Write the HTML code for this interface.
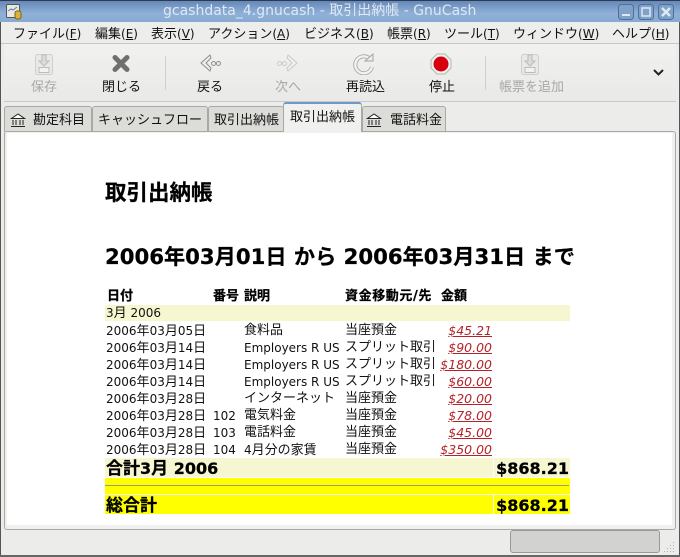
<!DOCTYPE html>
<html><head><meta charset="utf-8">
<style>
html,body{margin:0;padding:0;width:680px;height:557px;overflow:hidden;background:#ececea}
*{box-sizing:border-box}
body{font-family:"DejaVu Sans","WenQuanYi Zen Hei","Noto Sans CJK JP",sans-serif;font-size:13px;color:#111;position:relative}
.t{position:absolute;white-space:nowrap;line-height:16px}
.b{font-weight:bold;color:#000;-webkit-text-stroke:.25px #000}
.abs{position:absolute}
u{text-decoration:underline}
em{font-style:normal;font-size:12px}
.g{color:#a8a8a4}
.am{position:absolute;color:#b4232a;font-style:italic;font-size:12.5px;text-decoration:underline;white-space:nowrap;line-height:16px;text-align:right;right:188px}
.lg{font-size:17px;line-height:18px}
.lg em{font-size:16px}
</style></head><body>
<!-- title bar -->
<div class="abs" style="left:0;top:0;width:680px;height:22px;background:linear-gradient(#6688b8,#8fb1d8 60%,#88aad0);border-top:1px solid #2e3a50"></div>
<div class="t" style="left:163px;top:3px;color:#dfe8f2;font-size:14px">gcashdata_4.gnucash - 取引出納帳 - GnuCash</div>
<svg class="abs" style="left:4px;top:3px" width="18" height="17" viewBox="0 0 18 17"><rect x="2.500" y="1.500" width="13" height="13" rx="1" fill="#e8e8e4" stroke="#555"/><path d="M4 8l3-2 2 1 4-3" stroke="#5a7fb0" fill="none"/><rect x="11" y="8" width="6" height="8" rx="2" fill="#d9b23a" stroke="#7c6318"/></svg>
<svg class="abs" style="left:616px;top:2px" width="60" height="19" viewBox="0 0 60 19">
<g fill="#7fa2ca" stroke="#4f6f98"><rect x="2.500" y="2.500" width="15" height="15" rx="3"/><rect x="22.500" y="2.500" width="15" height="15" rx="3"/><rect x="42.500" y="2.500" width="15" height="15" rx="3"/></g>
<g stroke="#dfe8f2" stroke-width="2" fill="none"><path d="M6 13h8"/><rect x="26" y="6" width="8" height="8" stroke-width="1.500"/><path d="M46 6l8 8M54 6l-8 8" stroke-width="2.500"/></g></svg>
<div class="abs" style="left:0;top:22px;width:4px;height:535px;background:#ececea;border-left:1px solid #555"></div>
<div class="abs" style="right:0;top:22px;width:4px;height:535px;background:#ececea;border-right:1px solid #555"></div>
<!-- menu -->
<div class="abs" style="left:1px;top:22px;width:678px;height:22px;background:#ededeb;border-bottom:1px solid #c8c8c4"></div>
<div class="t" style="left:13px;top:26px">ファイル<em>(<u>F</u>)</em></div>
<div class="t" style="left:95px;top:26px">編集<em>(<u>E</u>)</em></div>
<div class="t" style="left:151px;top:26px">表示<em>(<u>V</u>)</em></div>
<div class="t" style="left:208px;top:26px">アクション<em>(<u>A</u>)</em></div>
<div class="t" style="left:304px;top:26px">ビジネス<em>(<u>B</u>)</em></div>
<div class="t" style="left:387px;top:26px">帳票<em>(<u>R</u>)</em></div>
<div class="t" style="left:444px;top:26px">ツール<em>(<u>T</u>)</em></div>
<div class="t" style="left:513px;top:26px">ウィンドウ<em>(<u>W</u>)</em></div>
<div class="t" style="left:612px;top:26px">ヘルプ<em>(<u>H</u>)</em></div>
<!-- toolbar -->
<div class="abs" style="left:4px;top:44px;width:672px;height:58px;background:linear-gradient(#f1f1ef,#e9e9e7);border-bottom:1px solid #c9c9c5"></div>
<svg class="abs" style="left:34px;top:52px" width="20" height="24" viewBox="0 0 20 24"><rect x="1.500" y="2.500" width="17" height="20" rx="2" fill="#e9e9e6" stroke="#cfcfcb"/><path d="M8 3h4v6h3l-5 5-5-5h3z" fill="#dcdcd8" stroke="#bcbcb8"/><rect x="5" y="15.500" width="10" height="5" fill="#f2f2f0" stroke="#bcbcb8"/></svg>
<div class="t g" style="left:31px;top:80px">保存</div>
<svg class="abs" style="left:111px;top:53px" width="20" height="21" viewBox="0 0 20 21"><path d="M4 4.500l12 12M16 4.500l-12 12" stroke="#6f6f6b" stroke-width="5" stroke-linecap="round"/></svg>
<div class="t" style="left:102px;top:80px">閉じる</div>
<div class="abs" style="left:165px;top:56px;width:1px;height:34px;background:#cfcfcb"></div>
<svg class="abs" style="left:198px;top:53px" width="24" height="20" viewBox="0 0 24 20"><path d="M12 2L3 10l9 8 1-3-5-5 5-5z" fill="#efefec" stroke="#8e8e8a"/><circle cx="15.500" cy="10.500" r="2" fill="none" stroke="#8e8e8a"/><circle cx="20.500" cy="10.500" r="2" fill="none" stroke="#8e8e8a"/></svg>
<div class="t" style="left:197px;top:80px">戻る</div>
<svg class="abs" style="left:276px;top:53px" width="24" height="20" viewBox="0 0 24 20"><path d="M12 2l9 8-9 8-1-3 5-5-5-5z" fill="#f0f0ee" stroke="#cacac6"/><circle cx="8.500" cy="10.500" r="2" fill="none" stroke="#cacac6"/><circle cx="3.500" cy="10.500" r="2" fill="none" stroke="#cacac6"/></svg>
<div class="t g" style="left:275px;top:80px">次へ</div>
<svg class="abs" style="left:352px;top:53px" width="24" height="22" viewBox="0 0 24 22"><path d="M18 6A8.500 8.500 0 1 0 20 14" fill="none" stroke="#a4a4a0" stroke-width="4"/><path d="M18 6A8.500 8.500 0 1 0 20 14" fill="none" stroke="#f2f2f0" stroke-width="2.400"/><path d="M13 8h8V1z" fill="#eeeeeb" stroke="#a4a4a0"/></svg>
<div class="t" style="left:346px;top:80px">再読込</div>
<svg class="abs" style="left:430px;top:53px" width="22" height="22" viewBox="0 0 22 22"><path d="M7 1h8l6 6v8l-6 6H7l-6-6V7z" fill="#f1f1ee" stroke="#b4b4b0"/><circle cx="11" cy="11" r="7.500" fill="#d6000f"/></svg>
<div class="t" style="left:429px;top:80px">停止</div>
<div class="abs" style="left:485px;top:56px;width:1px;height:34px;background:#cfcfcb"></div>
<svg class="abs" style="left:520px;top:52px" width="20" height="24" viewBox="0 0 20 24"><rect x="1.500" y="2.500" width="17" height="20" rx="2" fill="#e9e9e6" stroke="#cfcfcb"/><path d="M8 3h4v6h3l-5 5-5-5h3z" fill="#dcdcd8" stroke="#bcbcb8"/><rect x="5" y="15.500" width="10" height="5" fill="#f2f2f0" stroke="#bcbcb8"/></svg>
<div class="t g" style="left:499px;top:80px">帳票を追加</div>
<svg class="abs" style="left:652px;top:68px" width="13" height="9" viewBox="0 0 13 9"><path d="M2 2l4.500 4.500L11 2" fill="none" stroke="#222" stroke-width="2"/></svg>
<!-- tabs -->
<div class="abs" style="left:4px;top:106px;width:88px;height:26px;background:#dcdcd9;border:1px solid #a8a8a4;border-bottom:none;border-radius:3px 3px 0 0"></div>
<div class="abs" style="left:92px;top:106px;width:116px;height:26px;background:#dcdcd9;border:1px solid #a8a8a4;border-bottom:none;border-radius:3px 3px 0 0"></div>
<div class="abs" style="left:208px;top:106px;width:76px;height:26px;background:#dcdcd9;border:1px solid #a8a8a4;border-bottom:none;border-radius:3px 3px 0 0"></div>
<div class="abs" style="left:362px;top:106px;width:84px;height:26px;background:#dcdcd9;border:1px solid #a8a8a4;border-bottom:none;border-radius:3px 3px 0 0"></div>
<div class="abs" style="left:4px;top:131px;width:672px;height:399px;background:#f0f0ee;border:1px solid #a8a8a4;border-radius:3px"></div>
<div class="abs" style="left:283px;top:102px;width:79px;height:30px;background:#f0f0ee;border:1px solid #a8a8a4;border-top:2px solid #6f9ac8;border-bottom:none;border-radius:3px 3px 0 0"></div>
<svg class="abs" style="left:10px;top:113px" width="16" height="15" viewBox="0 0 16 15"><path d="M8 1L1.500 5.500h13z" fill="#fff" stroke="#222"/><path d="M3 7v5M6 7v5M10 7v5M13 7v5M1 13.500h14" stroke="#222" fill="none"/></svg>
<div class="t" style="left:33px;top:113px">勘定科目</div>
<div class="t" style="left:98px;top:113px">キャッシュフロー</div>
<div class="t" style="left:214px;top:113px">取引出納帳</div>
<div class="t" style="left:290px;top:110px">取引出納帳</div>
<svg class="abs" style="left:366px;top:113px" width="16" height="15" viewBox="0 0 16 15"><path d="M8 1L1.500 5.500h13z" fill="#fff" stroke="#222"/><path d="M3 7v5M6 7v5M10 7v5M13 7v5M1 13.500h14" stroke="#222" fill="none"/></svg>
<div class="t" style="left:390px;top:113px">電話料金</div>
<!-- content -->
<div class="abs" style="left:7px;top:133px;width:665px;height:392px;background:#fff"></div>
<div class="t b" style="left:105px;top:183px;font-size:21.500px;line-height:22px">取引出納帳</div>
<div class="t b" style="left:105px;top:245px;font-size:21.200px;line-height:24px">2006年03月01日 から 2006年03月31日 まで</div>
<div class="t b" style="left:107px;top:289px">日付</div>
<div class="t b" style="left:213px;top:289px">番号</div>
<div class="t b" style="left:244px;top:289px">説明</div>
<div class="t b" style="left:345px;top:289px;letter-spacing:.6px">資金移動元/先</div>
<div class="t b" style="left:441px;top:289px">金額</div>
<div class="abs" style="left:105px;top:305px;width:465px;height:16px;background:#f6f6d0"></div>
<div class="t" style="left:106px;top:305px"><em>3</em>月<em> 2006</em></div>

<div class="t" style="left:106px;top:323px"><em>2006</em>年<em>03</em>月<em>05</em>日</div><div class="t" style="left:244px;top:323px">食料品</div><div class="t" style="left:345px;top:323px">当座預金</div><div class="am" style="top:323px">$45.21</div>
<div class="t" style="left:106px;top:340px"><em>2006</em>年<em>03</em>月<em>14</em>日</div><div class="t" style="left:244px;top:340px"><em>Employers R US</em></div><div class="t" style="left:345px;top:340px">スプリット取引</div><div class="am" style="top:340px">$90.00</div>
<div class="t" style="left:106px;top:357px"><em>2006</em>年<em>03</em>月<em>14</em>日</div><div class="t" style="left:244px;top:357px"><em>Employers R US</em></div><div class="t" style="left:345px;top:357px">スプリット取引</div><div class="am" style="top:357px">$180.00</div>
<div class="t" style="left:106px;top:374px"><em>2006</em>年<em>03</em>月<em>14</em>日</div><div class="t" style="left:244px;top:374px"><em>Employers R US</em></div><div class="t" style="left:345px;top:374px">スプリット取引</div><div class="am" style="top:374px">$60.00</div>
<div class="t" style="left:106px;top:391px"><em>2006</em>年<em>03</em>月<em>28</em>日</div><div class="t" style="left:244px;top:391px">インターネット</div><div class="t" style="left:345px;top:391px">当座預金</div><div class="am" style="top:391px">$20.00</div>
<div class="t" style="left:106px;top:408px"><em>2006</em>年<em>03</em>月<em>28</em>日</div><div class="t" style="left:213px;top:408px"><em>102</em></div><div class="t" style="left:244px;top:408px">電気料金</div><div class="t" style="left:345px;top:408px">当座預金</div><div class="am" style="top:408px">$78.00</div>
<div class="t" style="left:106px;top:425px"><em>2006</em>年<em>03</em>月<em>28</em>日</div><div class="t" style="left:213px;top:425px"><em>103</em></div><div class="t" style="left:244px;top:425px">電話料金</div><div class="t" style="left:345px;top:425px">当座預金</div><div class="am" style="top:425px">$45.00</div>
<div class="t" style="left:106px;top:442px"><em>2006</em>年<em>03</em>月<em>28</em>日</div><div class="t" style="left:213px;top:442px"><em>104</em></div><div class="t" style="left:244px;top:442px"><em>4</em>月分の家賃</div><div class="t" style="left:345px;top:442px">当座預金</div><div class="am" style="top:442px">$350.00</div>

<div class="abs" style="left:105px;top:458px;width:388px;height:19px;background:#f6f6d0"></div>
<div class="abs" style="left:494px;top:458px;width:76px;height:19px;background:#f6f6d0"></div>
<div class="t b lg" style="left:106px;top:460px">合計<em>3</em>月<em> 2006</em></div>
<div class="t b lg" style="right:111px;top:460px"><em>$868.21</em></div>
<div class="abs" style="left:105px;top:478px;width:465px;height:16px;background:#ff0"></div>
<div class="abs" style="left:105px;top:485px;width:464px;height:1px;background:#999988"></div>
<div class="abs" style="left:105px;top:495px;width:388px;height:19px;background:#ff0"></div>
<div class="abs" style="left:494px;top:495px;width:76px;height:19px;background:#ff0"></div>
<div class="t b lg" style="left:106px;top:497px">総合計</div>
<div class="t b lg" style="right:111px;top:497px"><em>$868.21</em></div>
<!-- status bar -->
<div class="abs" style="left:510px;top:530px;width:150px;height:23px;background:#d2d2d0;border:1px solid #999;border-radius:3px"></div>
<svg class="abs" style="left:664px;top:541px" width="12" height="12" viewBox="0 0 12 12"><g fill="#b0b0ac"><rect x="9" y="1" width="1" height="1"/><rect x="6" y="4" width="1" height="1"/><rect x="9" y="4" width="1" height="1"/><rect x="3" y="7" width="1" height="1"/><rect x="6" y="7" width="1" height="1"/><rect x="9" y="7" width="1" height="1"/><rect x="0" y="10" width="1" height="1"/><rect x="3" y="10" width="1" height="1"/><rect x="6" y="10" width="1" height="1"/><rect x="9" y="10" width="1" height="1"/></g></svg>
<div class="abs" style="left:0;top:555px;width:680px;height:2px;background:#666"></div>
</body></html>
